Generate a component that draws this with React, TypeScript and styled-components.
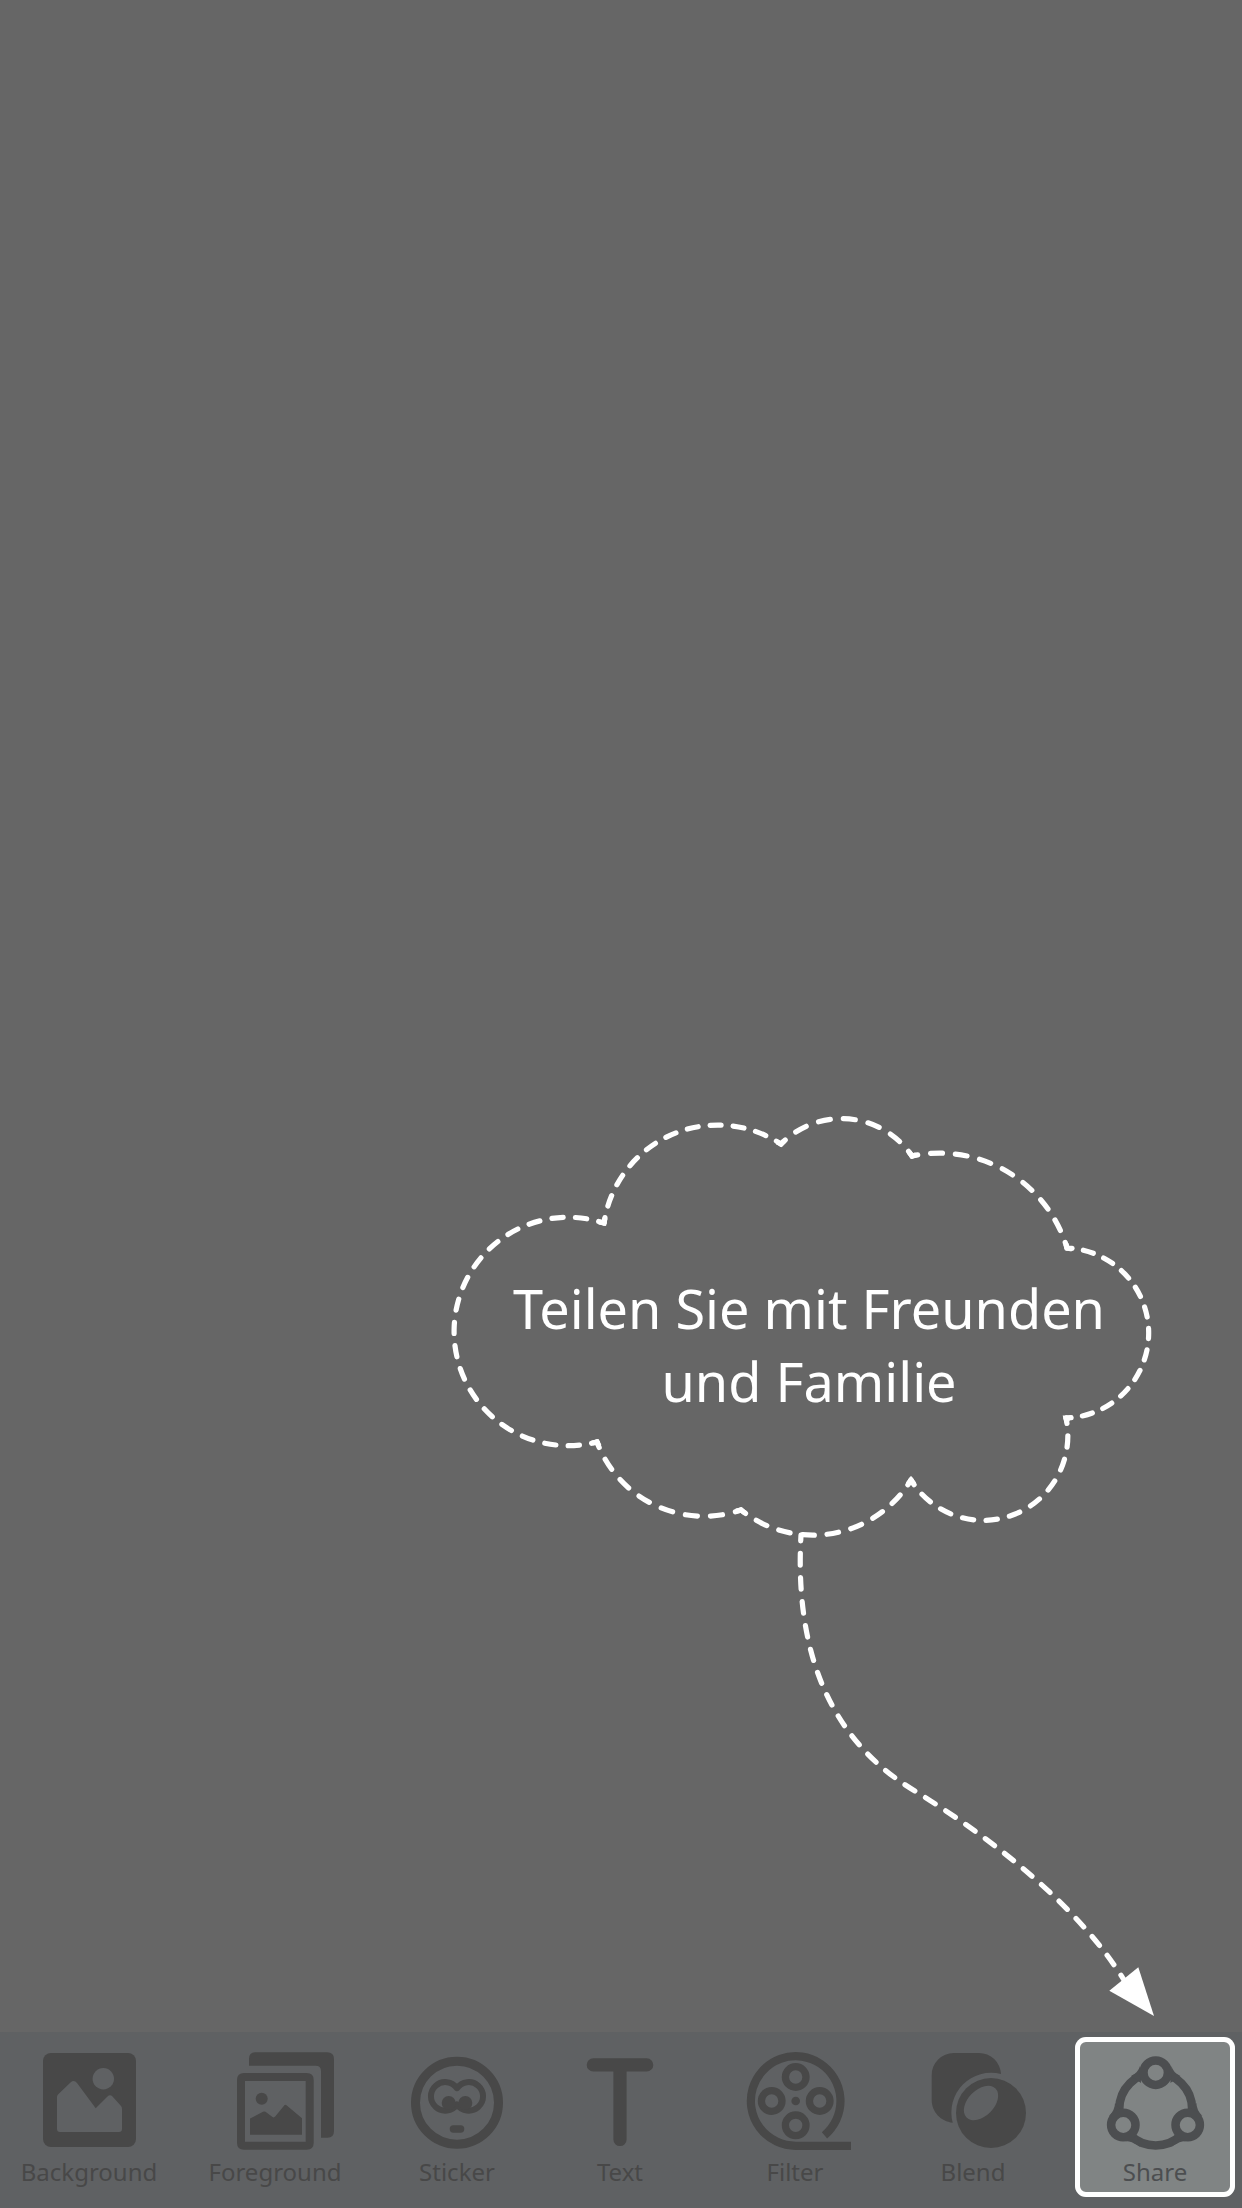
import React from "react";
import styled, { createGlobalStyle } from "styled-components";

const INK = "#484848";
const BAR = "#5f6163";
const ACTIVE = "#808484";

const GlobalStyle = createGlobalStyle`
  *, *::before, *::after { box-sizing: border-box; }
  body {
    margin: 0;
    background: #666666;
    font-family: "Noto Sans", "Open Sans", sans-serif;
  }
`;

const Page = styled.div`
  display: flex;
  flex-direction: column;
  min-height: 100vh;
`;

const Stage = styled.main`
  flex: 1;
  display: flex;
  flex-direction: column;
  justify-content: flex-end;
  align-items: flex-end;
  padding-right: 74px;
`;

const Callout = styled.section`
  width: 718px;
  max-width: 100%;
`;

const Bubble = styled.div`
  display: grid;
  align-items: center;
  > * { grid-area: 1 / 1; }
`;

const Drawing = styled.svg`
  display: block;
  width: 100%;
  height: auto;
  overflow: visible;
  fill: none;
  stroke: #ffffff;
`;

const Message = styled.p`
  margin: 0;
  padding-top: 40px;
  color: #ffffff;
  font-size: 54px;
  line-height: 73px;
  text-align: center;
`;

const Toolbar = styled.nav`
  display: grid;
  grid-template-columns: 150fr 222fr 142fr 184fr 166fr 190fr 174fr;
  padding: 5px 0 11px 14px;
  background: ${BAR};
`;

const Tool = styled.button<{ $active?: boolean }>`
  display: flex;
  flex-direction: column;
  align-items: center;
  min-width: 0;
  height: 160px;
  margin: 0 7px;
  padding: 13px 0 0;
  border: 0;
  border-radius: 11px;
  background: ${(p) => (p.$active ? ACTIVE : "transparent")};
  box-shadow: ${(p) => (p.$active ? "inset 0 0 0 5px #ffffff" : "none")};
  color: ${(p) => (p.$active ? "#4c4e50" : INK)};
  font-family: inherit;
  cursor: pointer;
`;

const Icon = styled.svg`
  display: block;
  flex: none;
  width: 120px;
  height: 100px;
`;

const Label = styled.span`
  margin-top: 4px;
  font-size: 24px;
  line-height: 36px;
  white-space: nowrap;
`;

/* Each lobe of the cloud, with the number of dashes that fit along it. */
const lobes: { d: string; n: number }[] = [
  { d: "M597 1442 A114.200 114.200 0 1 1 604 1223", n: 18 },
  { d: "M604 1223 A115 115 0 0 1 781 1144", n: 10 },
  { d: "M781 1144 A85 85 0 0 1 912 1156", n: 6 },
  { d: "M912 1156 A133 133 0 0 1 1067 1248", n: 8 },
  { d: "M1067 1248 A85.050 85.050 0 0 1 1066 1418", n: 12 },
  { d: "M1066 1418 A84.700 84.700 0 0 1 911 1480", n: 10 },
  { d: "M911 1480 A115 115 0 0 1 741 1510", n: 8 },
  { d: "M741 1510 A114 114 0 0 1 597 1442", n: 7 },
];

const corners =
  "M599 1222 L604 1223 L605 1218 M777 1142 L781 1144 L784 1141 M909 1152 L912 1156 L916 1155 " +
  "M1066 1244 L1067 1248 L1072 1249 M1070 1418 L1066 1418 L1067 1422 M914 1484 L911 1480 L908 1484 " +
  "M745 1513 L741 1510 L736 1511 M599 1446 L597 1442 L592 1443";

function Cloud() {
  return (
    <Drawing viewBox="450 1110 718 430" strokeWidth="5.200" aria-hidden="true">
      {lobes.map((lobe) => (
        <path
          key={lobe.d}
          d={lobe.d}
          pathLength={lobe.n * 24}
          strokeDasharray="11.5 12.5"
          strokeDashoffset="5.75"
          strokeLinecap="round"
        />
      ))}
      <path d={corners} />
    </Drawing>
  );
}

function Arrow() {
  return (
    <Drawing viewBox="450 1540 718 492" strokeWidth="5.200" aria-hidden="true">
      <path
        d="M801 1535 C794 1661 836 1744 915 1791 C999 1843 1080 1909 1124 1980"
        pathLength={576}
        strokeDasharray="11.5 12.5"
        strokeDashoffset="5.75"
        strokeLinecap="round"
      />
      <path d="M1138.3 1967.3 L1109.3 1990.7 L1154 2016 Z" fill="#ffffff" stroke="none" />
    </Drawing>
  );
}

function BackgroundIcon() {
  return (
    <Icon viewBox="0 0 120 100" aria-hidden="true">
      <rect x="14" y="3" width="93" height="94" rx="8" fill={INK} />
      <path
        d="M29 44.500 L41.500 32.500 Q45 29.500 48 33 L66.700 58.300 L78.500 46.500 Q81 44 83.500 46.500 L92 56 Q93 57 93 59 V79 Q93 82 90 82 H31 Q28 82 28 79 V47 Q28 45.500 29 44.500 Z"
        fill={BAR}
      />
      <circle cx="74.300" cy="28.700" r="10.700" fill={BAR} />
    </Icon>
  );
}

function ForegroundIcon() {
  return (
    <Icon viewBox="0 0 120 100" aria-hidden="true" fill={INK}>
      <path d="M34 15.700 V9 Q34 2.300 40 2.300 H112 Q119 2.300 119 9 V81 Q119 87.700 112.500 87.700 H106 V21 Q106 15.700 100.500 15.700 Z" />
      <path
        fillRule="evenodd"
        d="M29 23 H91.700 Q98.700 23 98.700 30 V92.700 Q98.700 99.700 91.700 99.700 H29 Q22 99.700 22 92.700 V30 Q22 23 29 23 Z M30 31 V91.700 H90.700 V31 Z"
      />
      <circle cx="46.700" cy="48.700" r="6" />
      <path d="M35 68.500 L48 61.800 Q49.300 61 50.500 61.800 L57.500 67 Q59 68 60.200 66.600 L69 55.800 Q70 54 71.500 55.300 L87 68.300 V84.700 H35 Z" />
    </Icon>
  );
}

function StickerIcon() {
  return (
    <Icon viewBox="0 0 120 100" aria-hidden="true" fill="none" stroke={INK}>
      <circle cx="60" cy="52.700" r="41.500" strokeWidth="9" />
      <path
        d="M60 38.200 A14.300 14.300 0 1 0 60 54.500 A14.300 14.300 0 1 0 60 38.200 Z"
        strokeWidth="6"
        strokeLinejoin="round"
      />
      <g fill={INK} stroke="none">
        <circle cx="51.700" cy="53" r="7" />
        <circle cx="68.300" cy="53" r="7" />
        <rect x="52.700" y="75.300" width="14.600" height="7.400" rx="3.700" />
      </g>
    </Icon>
  );
}

function TextIcon() {
  return (
    <Icon viewBox="0 0 120 100" aria-hidden="true" fill="none" stroke={INK} strokeWidth="13.200" strokeLinecap="round">
      <path d="M33.300 14.900 H86.700 M60 14.900 V89.500" />
    </Icon>
  );
}

function FilterIcon() {
  return (
    <Icon viewBox="0 0 120 100" aria-hidden="true" fill="none" stroke={INK}>
      <path d="M89.500 85.300 A44.800 44.800 0 1 0 60.700 95.800 H116" strokeWidth="8.200" />
      <g strokeWidth="7.300">
        <circle cx="60.700" cy="27" r="10.300" />
        <circle cx="60.700" cy="75.300" r="10.300" />
        <circle cx="36.700" cy="51" r="10.300" />
        <circle cx="84.700" cy="51" r="10.300" />
      </g>
      <circle cx="60.700" cy="51" r="4.300" fill={INK} stroke="none" />
    </Icon>
  );
}

function BlendIcon() {
  return (
    <Icon viewBox="0 0 120 100" aria-hidden="true" fill={INK}>
      <path d="M88 24 A39.700 39.700 0 0 0 39.700 72.700 C28 71.500 18.700 62 18.700 50 V25 A22 22 0 0 1 40.700 3 H66 A22 22 0 0 1 88 24 Z" />
      <circle cx="78" cy="63" r="35" />
      <ellipse cx="68" cy="53" rx="20.500" ry="13" transform="rotate(-45 68 53)" fill={BAR} />
    </Icon>
  );
}

function ShareFlares() {
  return (
    <g fill="currentColor" stroke="none">
      <path d="M45 16 Q43 23 36 26 L46 33 Z" />
      <path d="M20 53 Q20 60 14 66 L28 62 Z" />
      <path d="M28 91 Q37 90 45 97 L42 86 Z" />
    </g>
  );
}

function ShareIcon() {
  return (
    <Icon viewBox="0 0 120 100" aria-hidden="true" fill="none" stroke="currentColor" strokeWidth="8.500">
      <circle cx="60.700" cy="59" r="36.400" />
      <ShareFlares />
      <g transform="translate(121.400 0) scale(-1 1)">
        <ShareFlares />
      </g>
      <g fill={ACTIVE}>
        <circle cx="60.700" cy="22.700" r="12.200" />
        <circle cx="28.300" cy="75" r="12.200" />
        <circle cx="92.700" cy="75" r="12.200" />
      </g>
    </Icon>
  );
}

const tools = [
  { label: "Background", Glyph: BackgroundIcon },
  { label: "Foreground", Glyph: ForegroundIcon },
  { label: "Sticker", Glyph: StickerIcon },
  { label: "Text", Glyph: TextIcon },
  { label: "Filter", Glyph: FilterIcon },
  { label: "Blend", Glyph: BlendIcon },
  { label: "Share", Glyph: ShareIcon, active: true },
];

export default function App() {
  return (
    <>
      <GlobalStyle />
      <Page>
        <Stage>
          <Callout>
            <Bubble>
              <Cloud />
              <Message>
                Teilen Sie mit Freunden
                <br />
                und Familie
              </Message>
            </Bubble>
            <Arrow />
          </Callout>
        </Stage>
        <Toolbar>
          {tools.map(({ label, Glyph, active }) => (
            <Tool key={label} type="button" $active={active}>
              <Glyph />
              <Label>{label}</Label>
            </Tool>
          ))}
        </Toolbar>
      </Page>
    </>
  );
}
